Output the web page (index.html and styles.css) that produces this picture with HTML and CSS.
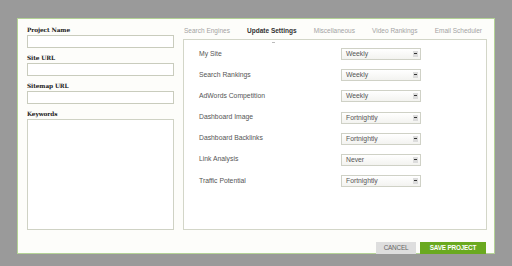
FILE: index.html
```html
<!DOCTYPE html>
<html>
<head>
<meta charset="utf-8">
<link rel="stylesheet" href="styles.css">
</head>
<body>
<div class="modal">
  <div class="left">
    <div class="field"><div class="label">Project Name</div><div class="input"></div></div>
    <div class="field"><div class="label">Site URL</div><div class="input"></div></div>
    <div class="field"><div class="label">Sitemap URL</div><div class="input"></div></div>
    <div class="field"><div class="label">Keywords</div><div class="textarea"></div></div>
  </div>
  <div class="right">
    <div class="tabs">
      <span class="tab">Search Engines</span>
      <span class="tab active">Update Settings</span>
      <span class="tab">Miscellaneous</span>
      <span class="tab">Video Rankings</span>
      <span class="tab">Email Scheduler</span>
    </div>
    <div class="panel">
      <div class="row"><span class="rlabel">My Site</span><span class="select">Weekly<i class="arrow"></i></span></div>
      <div class="row"><span class="rlabel">Search Rankings</span><span class="select">Weekly<i class="arrow"></i></span></div>
      <div class="row"><span class="rlabel">AdWords Competition</span><span class="select">Weekly<i class="arrow"></i></span></div>
      <div class="row"><span class="rlabel">Dashboard Image</span><span class="select">Fortnightly<i class="arrow"></i></span></div>
      <div class="row"><span class="rlabel">Dashboard Backlinks</span><span class="select">Fortnightly<i class="arrow"></i></span></div>
      <div class="row"><span class="rlabel">Link Analysis</span><span class="select">Never<i class="arrow"></i></span></div>
      <div class="row"><span class="rlabel">Traffic Potential</span><span class="select">Fortnightly<i class="arrow"></i></span></div>
    </div>
  </div>
  <div class="actions">
    <span class="btn cancel">CANCEL</span>
    <span class="btn save">SAVE PROJECT</span>
  </div>
</div>
</body>
</html>
```
FILE: styles.css
```css
html, body {
  margin: 0;
  padding: 0;
  background: #9a9a9a;
  width: 512px;
  height: 266px;
  overflow: hidden;
  font-family: "Liberation Sans", Arial, sans-serif;
}
.modal {
  box-sizing: border-box;
  margin: 18px 0 0 17px;
  width: 478px;
  height: 236px;
  background: #fdfdfa;
  border: 1px solid #b4d396;
  padding: 7px 7px 5px 9px;
  display: grid;
  grid-template-columns: 147px 1fr;
  grid-template-rows: auto auto;
  column-gap: 9px;
}
.left {
  display: flex;
  flex-direction: column;
}
.field {
  margin-bottom: 6px;
}
.label {
  font-size: 5.8px;
  font-weight: bold;
  line-height: 9px;
  height: 9px;
  color: #222;
  font-family: "DejaVu Serif", serif;
  letter-spacing: -0.1px;
}
.input {
  box-sizing: border-box;
  height: 13px;
  border: 1px solid #c9ccbd;
  background: #fff;
}
.textarea {
  box-sizing: border-box;
  height: 111px;
  border: 1px solid #cfd2c4;
  background: #fff;
}
.right {
  display: flex;
  flex-direction: column;
}
.tabs {
  height: 13px;
  display: flex;
  justify-content: space-between;
  padding: 0 5px 0 1px;
  font-size: 6.5px;
  line-height: 10px;
  color: #a3a3a3;
  position: relative;
}
.tab.active {
  color: #333;
  font-weight: bold;
  position: relative;
}
.tab.active::after {
  content: "";
  position: absolute;
  left: 50%;
  bottom: -4px;
  width: 3px;
  height: 1px;
  background: #bbb;
}
.panel {
  box-sizing: border-box;
  height: 191px;
  border: 1px solid #d3d6c8;
  background: #fff;
  padding: 8px 0 0 15px;
  display: flex;
  flex-direction: column;
  gap: 9.2px;
}
.row {
  display: grid;
  grid-template-columns: 142px 80px;
  align-items: center;
  height: 12px;
}
.rlabel {
  font-size: 6.8px;
  color: #555;
  line-height: 8px;
  margin-top: -1px;
}
.select {
  box-sizing: border-box;
  height: 12px;
  border: 1px solid #cfd1c6;
  background: linear-gradient(#fff, #f3f3f0);
  font-size: 6.8px;
  line-height: 10px;
  color: #555;
  padding-left: 4px;
  position: relative;
}
.arrow {
  position: absolute;
  right: 2px;
  top: 2px;
  width: 5px;
  height: 6px;
  background: #dcdcdc;
}
.arrow::after {
  content: "";
  position: absolute;
  left: 1px;
  top: 2px;
  width: 3px;
  height: 1px;
  background: #333;
}
.actions {
  grid-column: 2;
  display: flex;
  justify-content: flex-end;
  gap: 4px;
  margin-top: 6px;
  padding-right: 1px;
}
.btn {
  height: 12px;
  line-height: 12px;
  font-size: 6.4px;
  text-align: center;
  letter-spacing: -0.2px;
}
.cancel {
  width: 40px;
  background: #dedede;
  color: #666;
}
.save {
  width: 66px;
  background: #6aa91f;
  color: #fff;
  font-weight: bold;
}
```
